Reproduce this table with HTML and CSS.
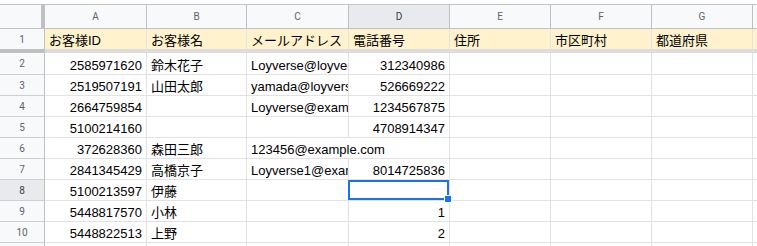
FILE: index.html
```html
<!DOCTYPE html>
<html lang="ja">
<head>
<meta charset="utf-8">
<title>Sheet</title>
<link rel="stylesheet" href="styles.css">
</head>
<body>
<div class="top"></div>
<div class="sheet">
  <div class="corner"></div>
  <div class="ch">A</div><div class="ch">B</div><div class="ch">C</div><div class="ch sel">D</div><div class="ch">E</div><div class="ch">F</div><div class="ch">G</div><div class="ch">H</div>

  <div class="rh r1">1</div>
  <div class="c hd">お客様ID</div><div class="c hd">お客様名</div><div class="c hd">メールアドレス</div><div class="c hd">電話番号</div><div class="c hd">住所</div><div class="c hd">市区町村</div><div class="c hd">都道府県</div><div class="c hd">郵便番号</div>

  <div class="rh">2</div>
  <div class="c n">2585971620</div><div class="c">鈴木花子</div><div class="c">Loyverse@loyverse.io</div><div class="c n">312340986</div><div class="c"></div><div class="c"></div><div class="c"></div><div class="c"></div>

  <div class="rh">3</div>
  <div class="c n">2519507191</div><div class="c">山田太郎</div><div class="c">yamada@loyverse.io</div><div class="c n">526669222</div><div class="c"></div><div class="c"></div><div class="c"></div><div class="c"></div>

  <div class="rh">4</div>
  <div class="c n">2664759854</div><div class="c"></div><div class="c">Loyverse@example.com</div><div class="c n">1234567875</div><div class="c"></div><div class="c"></div><div class="c"></div><div class="c"></div>

  <div class="rh">5</div>
  <div class="c n">5100214160</div><div class="c"></div><div class="c"></div><div class="c n">4708914347</div><div class="c"></div><div class="c"></div><div class="c"></div><div class="c"></div>

  <div class="rh">6</div>
  <div class="c n">372628360</div><div class="c">森田三郎</div><div class="c span2">123456@example.com</div><div class="c"></div><div class="c"></div><div class="c"></div><div class="c"></div>

  <div class="rh">7</div>
  <div class="c n">2841345429</div><div class="c">高橋京子</div><div class="c">Loyverse1@example.com</div><div class="c n">8014725836</div><div class="c"></div><div class="c"></div><div class="c"></div><div class="c"></div>

  <div class="rh sel">8</div>
  <div class="c n">5100213597</div><div class="c">伊藤</div><div class="c"></div><div class="c"></div><div class="c"></div><div class="c"></div><div class="c"></div><div class="c"></div>

  <div class="rh">9</div>
  <div class="c n">5448817570</div><div class="c">小林</div><div class="c"></div><div class="c n">1</div><div class="c"></div><div class="c"></div><div class="c"></div><div class="c"></div>

  <div class="rh">10</div>
  <div class="c n">5448822513</div><div class="c">上野</div><div class="c"></div><div class="c n">2</div><div class="c"></div><div class="c"></div><div class="c"></div><div class="c"></div>

  <div class="rh">11</div>
  <div class="c"></div><div class="c"></div><div class="c"></div><div class="c"></div><div class="c"></div><div class="c"></div><div class="c"></div><div class="c"></div>
</div>
<div class="selection"><span class="handle"></span></div>
</body>
</html>
```

FILE: styles.css
```css
html, body {
  margin: 0;
  padding: 0;
  background: #ffffff;
  overflow: hidden;
  width: 757px;
  height: 246px;
}

body {
  font-family: "Liberation Sans", Arial, "Noto Sans CJK JP", sans-serif;
  color: #000000;
}

.top {
  height: 4px;
  background: #ffffff;
}

.sheet {
  display: grid;
  width: 854px;
  grid-template-columns: 45px 102px 100px 102px 101px 101px 101px 101px 101px;
  grid-template-rows: 24px 24px 22px repeat(9, 21px);
  border-top: 1px solid #c4c4c4;
}

.sheet > div {
  box-sizing: border-box;
  min-width: 0;
}

.corner {
  background: #f8f9fa;
  border-right: 4px solid #c0c0c0;
  border-bottom: 1px solid #c0c0c0;
}

.ch {
  background: #f8f9fa;
  border-right: 1px solid #c0c0c0;
  border-bottom: 1px solid #c0c0c0;
  color: #5f6368;
  font-family: Roboto, "Liberation Sans", Arial, sans-serif;
  font-size: 10px;
  display: flex;
  align-items: center;
  justify-content: center;
  overflow: hidden;
}

.ch.sel {
  background: #e8eaed;
  color: #3c4043;
}

.rh {
  background: #f8f9fa;
  border-right: 1px solid #c0c0c0;
  border-bottom: 1px solid #cfcfcf;
  color: #5f6368;
  font-family: Roboto, "Liberation Sans", Arial, sans-serif;
  font-size: 10px;
  display: flex;
  align-items: center;
  justify-content: center;
  overflow: hidden;
}

.rh.r1 {
  border-bottom: 4px solid #c0c0c0;
}

.rh.sel {
  background: #e8eaed;
  color: #3c4043;
}

.c {
  border-right: 1px solid #e2e2e3;
  border-bottom: 1px solid #e2e2e3;
  font-size: 13px;
  line-height: 16px;
  padding: 0 0 0 4px;
  white-space: nowrap;
  overflow: hidden;
  display: flex;
  align-items: flex-end;
  justify-content: flex-start;
}

.c.n {
  justify-content: flex-end;
  padding: 0 4px 0 0;
}

.c.hd {
  background: #fff2cc;
  border-bottom: 4px solid #dadce0;
}

.c.span2 {
  grid-column: span 2;
}

.selection {
  position: absolute;
  left: 348px;
  top: 180px;
  width: 101px;
  height: 20px;
  box-sizing: border-box;
  border: 2px solid #1a73e8;
}

.handle {
  position: absolute;
  right: -5px;
  bottom: -5px;
  width: 6px;
  height: 6px;
  background: #1a73e8;
  border: 1px solid #ffffff;
}
```
